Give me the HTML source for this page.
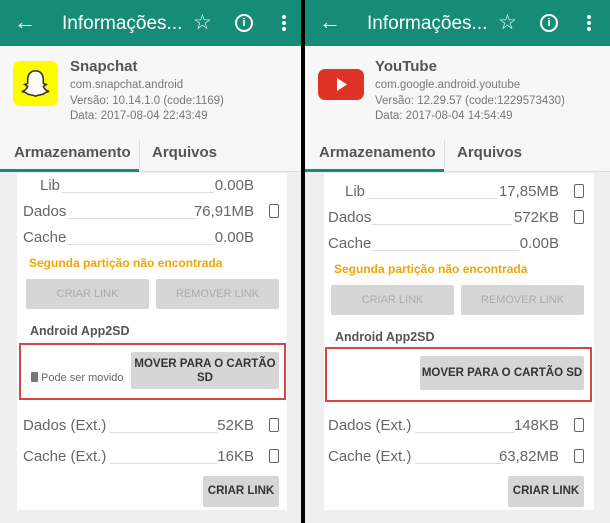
<!DOCTYPE html>
<html><head><meta charset="utf-8"><style>
*{margin:0;padding:0;box-sizing:border-box}
body{width:610px;height:523px;overflow:hidden;background:#000;font-family:"Liberation Sans",sans-serif;position:relative}
.p{position:absolute;top:0;height:523px;background:#efefef;overflow:hidden}
.p div,.p span,.p svg{position:absolute}
.bar{left:0;top:0;width:100%;height:46px;background:#168c76}
.title{color:#fff;font-size:19px;left:62px;top:13px}
.hdr{left:0;top:46px;width:100%;height:90px;background:#f7f7f7}
.name{left:70px;top:58px;font-size:15px;font-weight:bold;color:#555}
.sub{left:70px;font-size:11.5px;color:#777}
.tabs{left:0;top:136px;width:100%;height:36px;background:#f7f7f7;border-bottom:1px solid #ddd}
.tab{top:144px;font-size:15px;font-weight:bold;color:#555}
.card{left:17px;top:173px;width:270px;height:337px;background:#fff}
.lbl{font-size:15px;color:#666}
.dots{height:1px;background:#ddd}
.val{font-size:15px;color:#666;text-align:right;width:100px}
.p .ph{width:10px;height:14px;border:1.5px solid #666;border-radius:2px}
.btn{background:#d6d6d6;border-radius:2px;font-size:11px;text-align:center;color:#aaa}
.btn.d{color:#333;font-weight:bold;font-size:11.5px}
.warn{font-size:12px;color:#f0a500;font-weight:bold}
</style></head><body>

<!-- LEFT -->
<div class="p" style="left:0;width:301px">
<div class="bar"></div>
<span style="left:14px;top:9px;color:#fff;font-size:22px">←</span>
<div class="title">Informações...</div>
<span style="left:193px;top:10px;color:#fff;font-size:21px">☆</span>
<div style="left:235px;top:14px;width:18px;height:18px;border:2px solid #fff;border-radius:50%;color:#fff;font-size:11px;font-weight:bold;text-align:center;line-height:14px">i</div>
<div style="left:282px;top:15px;width:4px;height:4px;background:#fff;border-radius:2px;box-shadow:0 6px #fff,0 12px #fff"></div>
<div class="hdr"></div>
<div style="left:13px;top:61px;width:45px;height:45px;background:#fffc00;border-radius:7px"></div>
<svg style="left:16px;top:64px" width="39" height="39" viewBox="0 0 40 40"><path d="M20 7c-6 0-8 5-8 9v4l-3 1 3 2c-1 3-4 5-6 5 2 1 4 1 5 2 1 2 5 1 9 3 4-2 8-1 9-3 1-1 3-1 5-2-2 0-5-2-6-5l3-2-3-1v-4c0-4-2-9-8-9z" fill="#fff" stroke="#333" stroke-width="1.6"/></svg>
<div class="name">Snapchat</div>
<div class="sub" style="top:79px">com.snapchat.android</div>
<div class="sub" style="top:95px">Versão: 10.14.1.0 (code:1169)</div>
<div class="sub" style="top:110px">Data: 2017-08-04 22:43:49</div>
<div class="tabs"></div>
<div style="left:0;top:169px;width:139px;height:3px;background:#168c76"></div>
<div style="left:139px;top:140px;width:1px;height:28px;background:#ddd"></div>
<div class="tab" style="left:14px">Armazenamento</div>
<div class="tab" style="left:152px">Arquivos</div>
<div class="card"></div>
<div class="lbl" style="left:40px;top:177px">Lib</div><div class="dots" style="left:62px;top:192px;width:152px"></div><div class="val" style="left:154px;top:177px">0.00B</div>
<div class="lbl" style="left:23px;top:203px">Dados</div><div class="dots" style="left:67px;top:218px;width:130px"></div><div class="val" style="left:154px;top:203px">76,91MB</div><div class="ph" style="left:269px;top:204px"></div>
<div class="lbl" style="left:23px;top:229px">Cache</div><div class="dots" style="left:67px;top:244px;width:147px"></div><div class="val" style="left:154px;top:229px">0.00B</div>
<div class="warn" style="left:29px;top:256px">Segunda partição não encontrada</div>
<div class="btn" style="left:26px;top:279px;width:123px;height:30px;line-height:30px">CRIAR LINK</div>
<div class="btn" style="left:156px;top:279px;width:123px;height:30px;line-height:30px">REMOVER LINK</div>
<div style="left:30px;top:324px;font-size:12.5px;font-weight:bold;color:#555">Android App2SD</div>
<div style="left:19px;top:343px;width:267px;height:57px;border:2px solid #d64541"></div>
<div style="left:31px;top:372px;width:7px;height:10px;background:#777;border-radius:1px"></div>
<div style="left:41px;top:372px;font-size:11px;color:#666">Pode ser movido</div>
<div class="btn d" style="left:131px;top:352px;width:148px;height:37px;padding-top:5px;line-height:14px">MOVER PARA O CARTÃO<br>SD</div>
<div class="lbl" style="left:23px;top:417px">Dados (Ext.)</div><div class="dots" style="left:110px;top:432px;width:107px"></div><div class="val" style="left:154px;top:417px">52KB</div><div class="ph" style="left:269px;top:418px"></div>
<div class="lbl" style="left:23px;top:448px">Cache (Ext.)</div><div class="dots" style="left:110px;top:463px;width:107px"></div><div class="val" style="left:154px;top:448px">16KB</div><div class="ph" style="left:269px;top:449px"></div>
<div class="btn d" style="left:203px;top:476px;width:76px;height:31px;line-height:31px">CRIAR LINK</div>
</div>

<!-- RIGHT -->
<div class="p" style="left:305px;width:305px">
<div class="bar"></div>
<span style="left:14px;top:9px;color:#fff;font-size:22px">←</span>
<div class="title">Informações...</div>
<span style="left:193px;top:10px;color:#fff;font-size:21px">☆</span>
<div style="left:235px;top:14px;width:18px;height:18px;border:2px solid #fff;border-radius:50%;color:#fff;font-size:11px;font-weight:bold;text-align:center;line-height:14px">i</div>
<div style="left:282px;top:15px;width:4px;height:4px;background:#fff;border-radius:2px;box-shadow:0 6px #fff,0 12px #fff"></div>
<div class="hdr"></div>
<div style="left:13px;top:69px;width:46px;height:31px;background:#e03328;border-radius:7px"></div>
<svg style="left:13px;top:69px" width="46" height="31"><path d="M19 9l10 6.5L19 22z" fill="#fff"/></svg>
<div class="name">YouTube</div>
<div class="sub" style="top:79px">com.google.android.youtube</div>
<div class="sub" style="top:95px">Versão: 12.29.57 (code:1229573430)</div>
<div class="sub" style="top:110px">Data: 2017-08-04 14:54:49</div>
<div class="tabs"></div>
<div style="left:0;top:169px;width:139px;height:3px;background:#168c76"></div>
<div style="left:139px;top:140px;width:1px;height:28px;background:#ddd"></div>
<div class="tab" style="left:14px">Armazenamento</div>
<div class="tab" style="left:152px">Arquivos</div>
<div class="card" style="left:19px"></div>
<div class="lbl" style="left:40px;top:183px">Lib</div><div class="dots" style="left:62px;top:198px;width:130px"></div><div class="val" style="left:154px;top:183px">17,85MB</div><div class="ph" style="left:269px;top:184px"></div>
<div class="lbl" style="left:23px;top:209px">Dados</div><div class="dots" style="left:67px;top:224px;width:140px"></div><div class="val" style="left:154px;top:209px">572KB</div><div class="ph" style="left:269px;top:210px"></div>
<div class="lbl" style="left:23px;top:235px">Cache</div><div class="dots" style="left:67px;top:250px;width:147px"></div><div class="val" style="left:154px;top:235px">0.00B</div>
<div class="warn" style="left:29px;top:262px">Segunda partição não encontrada</div>
<div class="btn" style="left:26px;top:285px;width:123px;height:30px;line-height:30px">CRIAR LINK</div>
<div class="btn" style="left:156px;top:285px;width:123px;height:30px;line-height:30px">REMOVER LINK</div>
<div style="left:30px;top:330px;font-size:12.5px;font-weight:bold;color:#555">Android App2SD</div>
<div style="left:20px;top:347px;width:267px;height:55px;border:2px solid #d64541"></div>
<div class="btn d" style="left:115px;top:356px;width:164px;height:34px;line-height:34px">MOVER PARA O CARTÃO SD</div>
<div class="lbl" style="left:23px;top:417px">Dados (Ext.)</div><div class="dots" style="left:110px;top:432px;width:100px"></div><div class="val" style="left:154px;top:417px">148KB</div><div class="ph" style="left:269px;top:418px"></div>
<div class="lbl" style="left:23px;top:448px">Cache (Ext.)</div><div class="dots" style="left:110px;top:463px;width:88px"></div><div class="val" style="left:154px;top:448px">63,82MB</div><div class="ph" style="left:269px;top:449px"></div>
<div class="btn d" style="left:203px;top:476px;width:76px;height:31px;line-height:31px">CRIAR LINK</div>
</div>
</body></html>
